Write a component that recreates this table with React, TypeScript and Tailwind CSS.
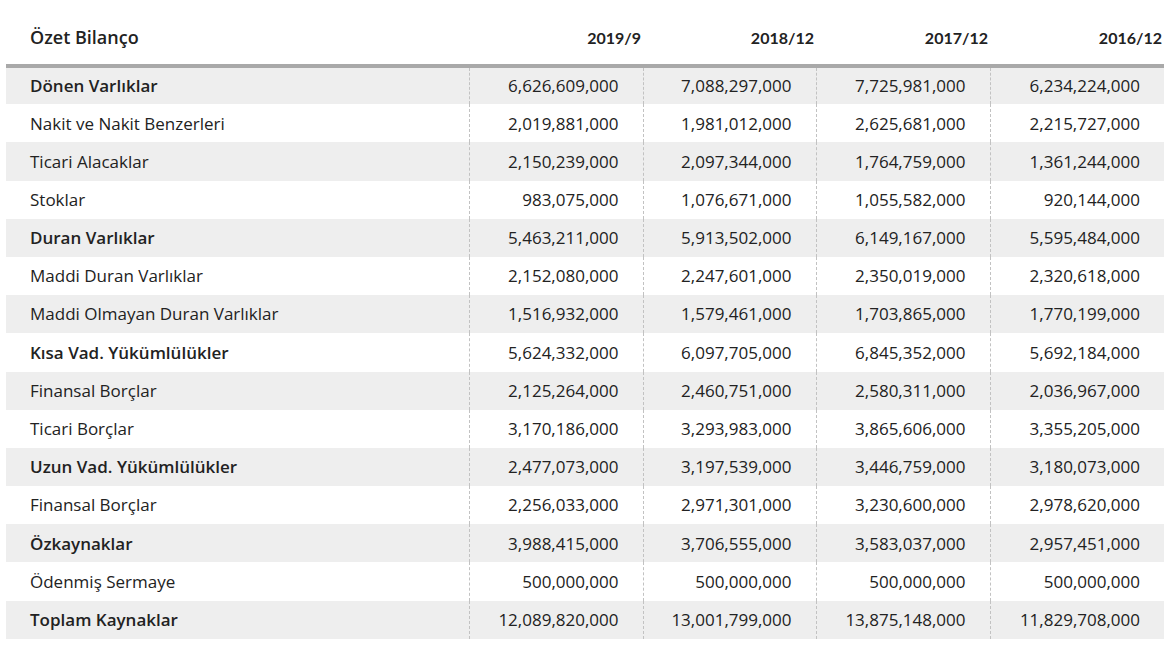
import React from 'react';

type Row = { label: string; bold?: boolean; values: string[] };

const years = ['2019/9', '2018/12', '2017/12', '2016/12'];

const rows: Row[] = [
  { label: 'Dönen Varlıklar', bold: true, values: ['6,626,609,000', '7,088,297,000', '7,725,981,000', '6,234,224,000'] },
  { label: 'Nakit ve Nakit Benzerleri', values: ['2,019,881,000', '1,981,012,000', '2,625,681,000', '2,215,727,000'] },
  { label: 'Ticari Alacaklar', values: ['2,150,239,000', '2,097,344,000', '1,764,759,000', '1,361,244,000'] },
  { label: 'Stoklar', values: ['983,075,000', '1,076,671,000', '1,055,582,000', '920,144,000'] },
  { label: 'Duran Varlıklar', bold: true, values: ['5,463,211,000', '5,913,502,000', '6,149,167,000', '5,595,484,000'] },
  { label: 'Maddi Duran Varlıklar', values: ['2,152,080,000', '2,247,601,000', '2,350,019,000', '2,320,618,000'] },
  { label: 'Maddi Olmayan Duran Varlıklar', values: ['1,516,932,000', '1,579,461,000', '1,703,865,000', '1,770,199,000'] },
  { label: 'Kısa Vad. Yükümlülükler', bold: true, values: ['5,624,332,000', '6,097,705,000', '6,845,352,000', '5,692,184,000'] },
  { label: 'Finansal Borçlar', values: ['2,125,264,000', '2,460,751,000', '2,580,311,000', '2,036,967,000'] },
  { label: 'Ticari Borçlar', values: ['3,170,186,000', '3,293,983,000', '3,865,606,000', '3,355,205,000'] },
  { label: 'Uzun Vad. Yükümlülükler', bold: true, values: ['2,477,073,000', '3,197,539,000', '3,446,759,000', '3,180,073,000'] },
  { label: 'Finansal Borçlar', values: ['2,256,033,000', '2,971,301,000', '3,230,600,000', '2,978,620,000'] },
  { label: 'Özkaynaklar', bold: true, values: ['3,988,415,000', '3,706,555,000', '3,583,037,000', '2,957,451,000'] },
  { label: 'Ödenmiş Sermaye', values: ['500,000,000', '500,000,000', '500,000,000', '500,000,000'] },
  { label: 'Toplam Kaynaklar', bold: true, values: ['12,089,820,000', '13,001,799,000', '13,875,148,000', '11,829,708,000'] },
];

const App: React.FC = () => {
  return (
    <div className="min-h-screen bg-white pl-[6px] pr-[12px] text-[#222222]" style={{ fontFamily: '"Open Sans", sans-serif' }}>
      <table className="w-[1158px] table-fixed border-collapse">
        <colgroup>
          <col className="w-[463px]" />
          <col className="w-[174px]" />
          <col className="w-[173px]" />
          <col className="w-[174px]" />
          <col className="w-[174px]" />
        </colgroup>
        {/* Header */}
        <thead>
          <tr className="h-[66px] border-b-4 border-[#a9a9a9]">
            <th className="pl-6 pb-[13px] text-left align-bottom text-[18px] font-semibold">Özet Bilanço</th>
            {years.map((y) => (
              <th
                key={y}
                className="pr-[2px] pb-[14px] text-right align-bottom text-[16px] font-bold"
                style={{ fontFamily: 'Lato, sans-serif' }}
              >
                {y}
              </th>
            ))}
          </tr>
        </thead>
        <tbody>
          {rows.map((row, i) => (
            <tr key={i} className={`h-[38.2px] ${i % 2 === 0 ? 'bg-[#eeeeee]' : 'bg-white'}`}>
              <td className={`pl-6 text-[17px] ${row.bold ? 'font-semibold' : 'font-normal'}`}>{row.label}</td>
              {row.values.map((v, j) => (
                <td key={j} className="border-l border-dashed border-[#c2c2c2] pr-[24px] text-right text-[17px]">
                  {v}
                </td>
              ))}
            </tr>
          ))}
        </tbody>
      </table>
    </div>
  );
};

export default App;
